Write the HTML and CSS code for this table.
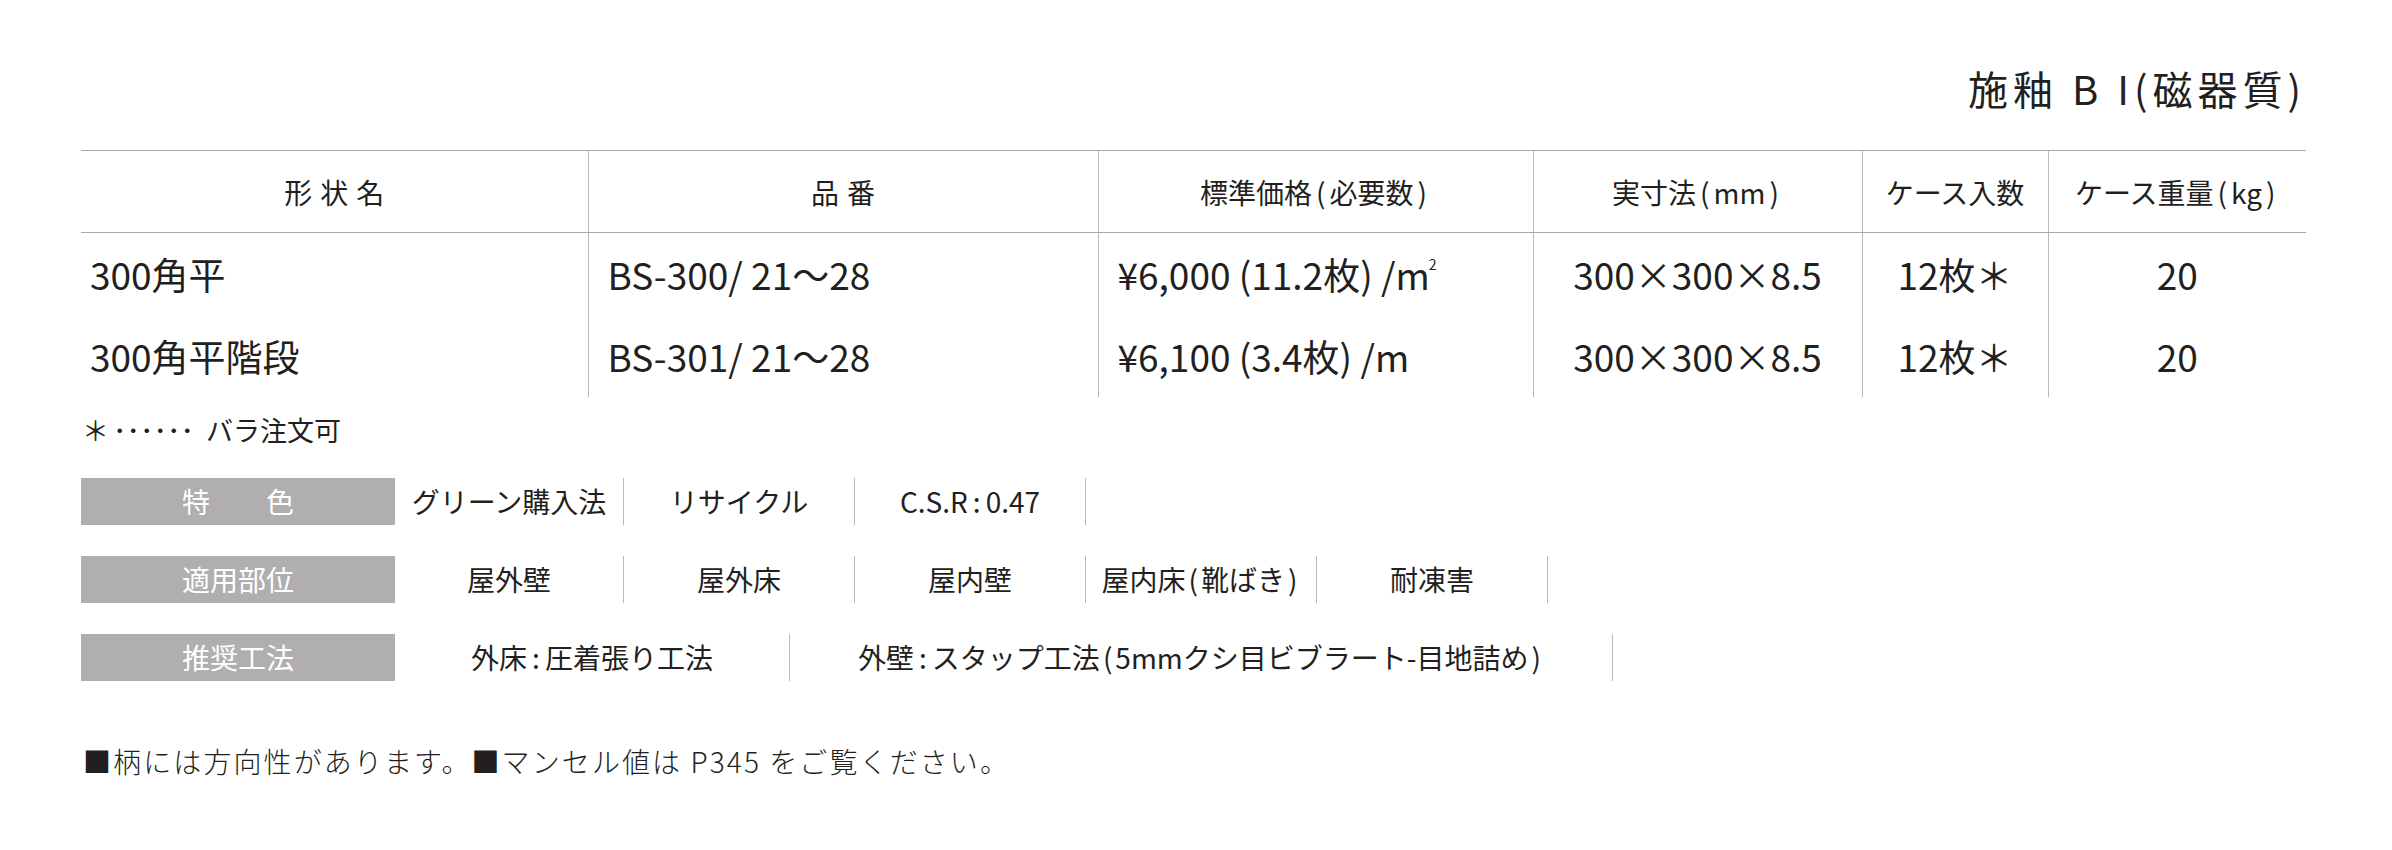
FILE: index.html
```html
<!DOCTYPE html>
<html lang="ja">
<head>
<meta charset="utf-8">
<title>施釉 BI(磁器質)</title>
<link rel="stylesheet" href="styles.css">
</head>
<body>
<div class="page">
  <h1 class="title">施釉 B I(磁器質)</h1>

  <table class="spec">
    <colgroup>
      <col class="c1"><col class="c2"><col class="c3"><col class="c4"><col class="c5"><col class="c6">
    </colgroup>
    <thead>
      <tr>
        <th><span class="spaced">形状名</span></th>
        <th><span class="spaced">品番</span></th>
        <th>標準価格<span class="par">(</span>必要数<span class="par">)</span></th>
        <th>実寸法<span class="par">(</span>mm<span class="par">)</span></th>
        <th>ケース入数</th>
        <th>ケース重量<span class="par">(</span>kg<span class="par">)</span></th>
      </tr>
    </thead>
    <tbody>
      <tr>
        <td class="name">300角平</td>
        <td class="left">BS-300/ 21～28</td>
        <td class="left price">¥6,000 (11.2枚) /m<span class="sq">2</span></td>
        <td>300×300×8.5</td>
        <td>12枚＊</td>
        <td>20</td>
      </tr>
      <tr>
        <td class="name">300角平階段</td>
        <td class="left">BS-301/ 21～28</td>
        <td class="left price">¥6,100 (3.4枚) /m</td>
        <td>300×300×8.5</td>
        <td>12枚＊</td>
        <td>20</td>
      </tr>
    </tbody>
  </table>

  <p class="note">＊<span class="dots">･･････</span>バラ注文可</p>

  <div class="features">
    <div class="frow">
      <div class="label">特　　色</div>
      <div class="cell">グリーン購入法</div>
      <div class="cell">リサイクル</div>
      <div class="cell">C.S.R<span class="colon">:</span>0.47</div>
    </div>
    <div class="frow">
      <div class="label">適用部位</div>
      <div class="cell">屋外壁</div>
      <div class="cell">屋外床</div>
      <div class="cell">屋内壁</div>
      <div class="cell">屋内床<span class="par">(</span>靴ばき<span class="par">)</span></div>
      <div class="cell">耐凍害</div>
    </div>
    <div class="frow">
      <div class="label">推奨工法</div>
      <div class="cell wide1">外床<span class="colon">:</span>圧着張り工法</div>
      <div class="cell wide2">外壁<span class="colon">:</span>スタップ工法<span class="par">(</span>5mmクシ目ビブラート-目地詰め<span class="par">)</span></div>
    </div>
  </div>

  <p class="footer">■柄には方向性があります。■マンセル値は P345 をご覧ください。</p>
</div>
</body>
</html>
```

FILE: styles.css
```css
* { box-sizing: border-box; }

html, body {
  margin: 0;
  padding: 0;
  background: #ffffff;
}

body {
  font-family: "Noto Sans CJK JP", "Noto Sans", sans-serif;
  color: #231f20;
}

.page {
  width: 2306px;
  padding-left: 81px;
}

.title {
  margin: 68px 0 0 0;
  font-size: 40px;
  line-height: 40px;
  font-weight: 400;
  letter-spacing: 5px;
  text-align: right;
}

.spec {
  margin-top: 42px;
  width: 2225px;
  border-collapse: collapse;
  table-layout: fixed;
}

.c1 { width: 507px; }
.c2 { width: 510px; }
.c3 { width: 435px; }
.c4 { width: 329px; }
.c5 { width: 186px; }
.c6 { width: 258px; }

.spec th {
  height: 82px;
  padding: 0;
  font-size: 28px;
  font-weight: 400;
  text-align: center;
  vertical-align: middle;
  border-top: 1px solid #a9a9a9;
  border-bottom: 1px solid #a9a9a9;
  border-left: 1px solid #b9b9b9;
  white-space: nowrap;
}

.spec th:first-child,
.spec td:first-child {
  border-left: none;
}

.spaced {
  letter-spacing: 8px;
  margin-right: -8px;
}

.par {
  display: inline-block;
  margin: 0 3px;
}

.spec th .par {
  margin: 0 4px;
}

.colon {
  display: inline-block;
  margin: 0 5px;
}

.spec td {
  height: 82px;
  padding: 0;
  font-size: 37px;
  line-height: 40px;
  text-align: center;
  vertical-align: middle;
  border-left: 1px solid #b9b9b9;
  white-space: nowrap;
}

.spec td.name {
  text-align: left;
  padding-left: 9px;
}

.spec td.left {
  text-align: left;
  padding-left: 19px;
}

.sq {
  display: inline-block;
  font-size: 14px;
  line-height: 0;
  vertical-align: 20px;
  margin-left: -1px;
}

.note {
  margin: 15px 0 0 1px;
  font-size: 27px;
  line-height: 36px;
}

.dots {
  margin: 0 12px 0 4px;
}

.features {
  margin-top: 30px;
  display: flex;
  flex-direction: column;
  gap: 31px;
}

.frow {
  display: flex;
  height: 47px;
}

.label {
  width: 314px;
  height: 47px;
  background: #b0aeaf;
  color: #ffffff;
  font-size: 28px;
  display: flex;
  align-items: center;
  justify-content: center;
}

.cell {
  width: 231px;
  height: 47px;
  border-right: 1px solid #b9b9b9;
  font-size: 28px;
  display: flex;
  align-items: center;
  justify-content: center;
  white-space: nowrap;
}

.frow .label + .cell { width: 229px; }
.frow .cell.wide1 { width: 395px; }
.frow .cell.wide2 { width: 823px; }

.footer {
  margin: 60px 0 0 2px;
  font-size: 28px;
  line-height: 40px;
  font-weight: 300;
  letter-spacing: 2.1px;
}
```
